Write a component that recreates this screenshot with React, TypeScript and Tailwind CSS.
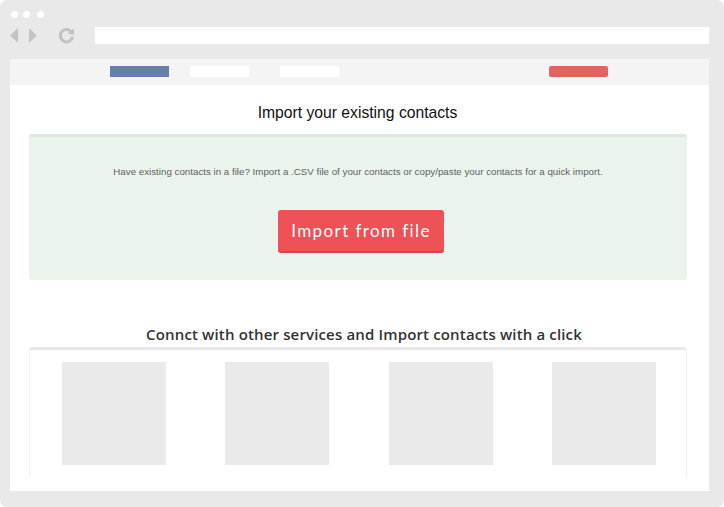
import React from "react";

export default function App() {
  return (
    <div className="w-[724px] h-[507px] bg-white">
      <div className="h-full rounded-[7px] bg-[#e9e9e9] flex flex-col pl-[10px] pr-[15px]">
        {/* browser chrome */}
        <div className="h-[59px] flex flex-col">
          <div className="flex pt-[11px] pl-[1px] gap-[5px]">
            <div className="w-[7px] h-[7px] rounded-full bg-white" />
            <div className="w-[7px] h-[7px] rounded-full bg-white" />
            <div className="w-[7px] h-[7px] rounded-full bg-white ml-[2px]" />
          </div>
          <div className="flex items-center mt-[9px] h-[17px]">
            <svg width="28" height="17" viewBox="0 0 28 17" className="shrink-0">
              <polygon points="8,1 8,16 0,8.5" fill="#c4c4c4" />
              <polygon points="19,1 19,16 27,8.5" fill="#c4c4c4" />
            </svg>
            <svg width="17" height="17" viewBox="0 0 17 17" className="ml-[20px] shrink-0">
              <path d="M13.2 4.6 A6.2 6.2 0 1 0 14.6 9.8" fill="none" stroke="#c2c2c2" strokeWidth="3" />
              <polygon points="16,1.5 16,8 9.5,6.5" fill="#c2c2c2" />
            </svg>
            <div className="flex-1 h-[17px] bg-white ml-[20px]" />
          </div>
        </div>

        {/* page */}
        <div className="h-[432px] bg-white flex flex-col">
          <div className="h-[26px] bg-[#f4f4f4] flex items-start pt-[7px] pl-[100px]">
            <div className="w-[59px] h-[11px] bg-[#6680ab]" />
            <div className="w-[59px] h-[11px] bg-white ml-[21px]" />
            <div className="w-[59px] h-[11px] bg-white ml-[31px]" />
            <div className="w-[59px] h-[11px] bg-[#df6460] rounded-[2px] ml-[210px]" />
          </div>

          <h1 className="mt-[18px] pr-[4px] text-center text-[15.7px] leading-[20px] text-[#111] font-['Liberation_Sans',Arial,sans-serif]">
            Import your existing contacts
          </h1>

          <div className="mt-[11px] ml-[19px] w-[658px] h-[146px] bg-[#ebf4ec] border-t-[3px] border-[#dce8de] rounded-[3px] flex flex-col items-center">
            <p className="mt-[28px] text-[9.75px] leading-[14px] text-[#5f5f5f] font-['Liberation_Sans',Arial,sans-serif]">
              Have existing contacts in a file? Import a .CSV file of your contacts or copy/paste your contacts for a quick import.
            </p>
            <button className="mt-[31px] ml-[6px] w-[166px] h-[43px] bg-[#ee5156] border-b-2 border-[#d9444a] rounded-[3px] text-white text-[17px] tracking-[1.4px] font-['Lato',sans-serif] flex items-center justify-center">
              Import from file
            </button>
          </div>

          <h2 className="mt-[44px] pl-[9px] text-center text-[15px] leading-[20px] font-semibold text-[#333] tracking-[0.15px] font-['Open_Sans',sans-serif]">
            Connct with other services and Import contacts with a click
          </h2>

          <div className="mt-[3px] ml-[19px] w-[658px] h-[130px] border-t-[3px] border-x border-t-[#e8e8e8] border-x-[#efefef] rounded-t-[3px] grid grid-cols-4 justify-items-center items-start pt-[12px] pl-[2px]">
            <div className="w-[104px] h-[103px] bg-[#eaeaea]" />
            <div className="w-[104px] h-[103px] bg-[#eaeaea]" />
            <div className="w-[104px] h-[103px] bg-[#eaeaea]" />
            <div className="w-[104px] h-[103px] bg-[#eaeaea]" />
          </div>
        </div>
      </div>
    </div>
  );
}
